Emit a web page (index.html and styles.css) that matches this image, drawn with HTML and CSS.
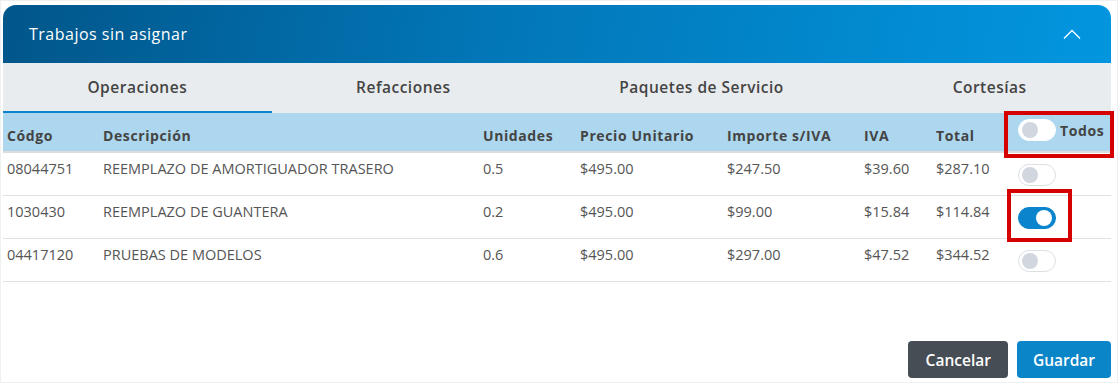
FILE: index.html
```html
<!DOCTYPE html>
<html lang="es">
<head>
    <meta charset="UTF-8">
    <meta name="viewport" content="width=device-width, initial-scale=1.0">
    <title>Trabajos sin asignar</title>
    <link rel="stylesheet" href="styles.css">
</head>
<body>
    <div class="page">
        <div class="card">
            <!-- Encabezado -->
            <div class="card-header">
                <span class="card-title">Trabajos sin asignar</span>
                <svg class="chevron" width="18" height="11" viewBox="0 0 18 11">
                    <path d="M1 9.5 L9 1.5 L17 9.5" fill="none" stroke="#fff" stroke-width="1.3"/>
                </svg>
            </div>

            <!-- Pestañas -->
            <ul class="tabs">
                <li class="tab active">Operaciones</li>
                <li class="tab">Refacciones</li>
                <li class="tab">Paquetes de Servicio</li>
                <li class="tab">Cortesías</li>
            </ul>

            <table class="jobs">
                <colgroup>
                    <col style="width: 96px">
                    <col style="width: 380px">
                    <col style="width: 97px">
                    <col style="width: 147px">
                    <col style="width: 137px">
                    <col style="width: 72px">
                    <col style="width: 72px">
                    <col style="width: 107px">
                </colgroup>
                <thead>
                    <tr>
                        <th>Códgo</th>
                        <th>Descripción</th>
                        <th>Unidades</th>
                        <th>Precio Unitario</th>
                        <th>Importe s/IVA</th>
                        <th>IVA</th>
                        <th>Total</th>
                        <th class="all marked">
                            <div class="all-wrap">
                                <span class="switch"></span>
                                <span>Todos</span>
                            </div>
                        </th>
                    </tr>
                </thead>
                <tbody>
                    <tr>
                        <td>08044751</td>
                        <td>REEMPLAZO DE AMORTIGUADOR TRASERO</td>
                        <td>0.5</td>
                        <td>$495.00</td>
                        <td>$247.50</td>
                        <td>$39.60</td>
                        <td>$287.10</td>
                        <td class="sw-cell"><span class="switch"></span></td>
                    </tr>
                    <tr>
                        <td>1030430</td>
                        <td>REEMPLAZO DE GUANTERA</td>
                        <td>0.2</td>
                        <td>$495.00</td>
                        <td>$99.00</td>
                        <td>$15.84</td>
                        <td>$114.84</td>
                        <td class="sw-cell"><span class="sw-mark"><span class="switch on"></span></span></td>
                    </tr>
                    <tr>
                        <td>04417120</td>
                        <td>PRUEBAS DE MODELOS</td>
                        <td>0.6</td>
                        <td>$495.00</td>
                        <td>$297.00</td>
                        <td>$47.52</td>
                        <td>$344.52</td>
                        <td class="sw-cell"><span class="switch"></span></td>
                    </tr>
                </tbody>
            </table>

            <div class="actions">
                <button class="btn btn-dark">Cancelar</button>
                <button class="btn btn-blue">Guardar</button>
            </div>
        </div>
    </div>
</body>
</html>
```

FILE: styles.css
```css
body {
    margin: 0;
    background: #fff;
    font-family: 'Open Sans', sans-serif;
    color: #555;
}

.page {
    width: 1118px;
    height: 383px;
    border: 1px solid #eef0f2;
    padding: 4px 0 0 2px;
    box-sizing: border-box;
}

.card {
    width: 1108px;
}

.card-header {
    height: 58px;
    display: flex;
    align-items: center;
    justify-content: space-between;
    padding: 0 30px 0 26px;
    border-radius: 13px 13px 0 0;
    background: linear-gradient(100deg, #01568a 0%, #0277b8 45%, #0296df 100%);
    color: #fff;
    box-sizing: border-box;
}

.card-title {
    font-size: 16px;
    font-weight: 500;
    letter-spacing: 0.5px;
}

.chevron {
    margin-top: 1px;
}

.tabs {
    list-style: none;
    margin: 0;
    padding: 0;
    display: flex;
    background: #e9ecef;
}

.tab {
    flex: 1 1 auto;
    text-align: center;
    height: 48px;
    line-height: 48px;
    font-size: 15.5px;
    font-weight: 600;
    letter-spacing: 0.5px;
    color: #444;
    border-bottom: 2px solid transparent;
}

.tab.active {
    border-bottom-color: #0a84cc;
}

.jobs {
    width: 1108px;
    border-collapse: collapse;
    table-layout: fixed;
    font-size: 14.5px;
}

.jobs th {
    background: #acd7ee;
    text-align: left;
    font-weight: 700;
    color: #444;
    letter-spacing: 0.6px;
    font-size: 14px;
    padding: 13px 4px 6px;
    height: 19px;
    vertical-align: bottom;
    border-bottom: 2px solid #dcdcdc;
    white-space: nowrap;
}

.jobs td {
    padding: 6px 4px 9px;
    line-height: 20px;
    vertical-align: top;
    border-bottom: 1px solid #dee2e6;
    white-space: nowrap;
}

.jobs .all {
    padding: 0 0 0 14px;
    vertical-align: middle;
    position: relative;
}

.all-wrap {
    display: flex;
    align-items: center;
    gap: 4px;
    margin-top: -4px;
}

/* recuadros rojos de anotación */
.marked::after {
    content: "";
    position: absolute;
    left: 0;
    top: -2px;
    right: -3px;
    bottom: -7px;
    border: 4px solid #d50000;
}

.sw-cell {
    padding-left: 14px !important;
}

.sw-mark {
    display: inline-block;
    position: relative;
}

.sw-mark::after {
    content: "";
    position: absolute;
    left: -11px;
    right: -16px;
    top: -13px;
    bottom: -13px;
    border: 4px solid #d50000;
}

.switch {
    display: inline-block;
    position: relative;
    width: 38px;
    height: 22px;
    margin-top: 5px;
    border: 1px solid #dcdfe4;
    border-radius: 12px;
    background: #fff;
    box-sizing: border-box;
    vertical-align: top;
}

.switch::before {
    content: "";
    position: absolute;
    left: 3px;
    top: 2px;
    width: 16px;
    height: 16px;
    border-radius: 50%;
    background: #d2d6de;
}

.all .switch {
    margin-top: 0;
    border-color: #fff;
}

.switch.on {
    background: #0a84cc;
    border-color: #0a84cc;
}

.switch.on::before {
    left: auto;
    right: 3px;
    background: #fff;
}

.actions {
    display: flex;
    justify-content: flex-end;
    gap: 9px;
    margin-top: 59px;
}

.btn {
    font-family: 'Open Sans', sans-serif;
    font-size: 15.5px;
    font-weight: 600;
    color: #fff;
    border: none;
    border-radius: 4px;
    height: 37px;
    padding: 0 17px 0 18px;
}

.btn-blue {
    background: #0a86c8;
    padding: 0 16px;
}

.btn-dark {
    background: #474d55;
}
```
